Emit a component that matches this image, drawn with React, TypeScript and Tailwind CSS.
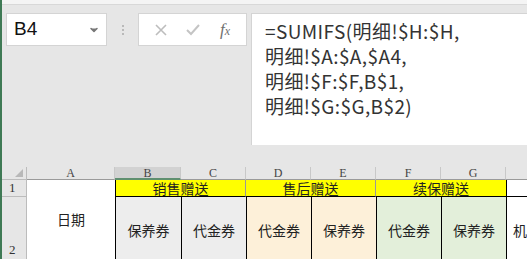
import { ChevronDown } from "lucide-react"

const cjk = { fontFamily: '"Noto Sans CJK SC", "Noto Sans", sans-serif' }
const serif = { fontFamily: '"Liberation Serif", "DejaVu Serif", serif' }

const colLetters = ["A", "B", "C", "D", "E", "F", "G", ""]

export default function App() {
  return (
    <div className="w-[527px] h-[259px] overflow-hidden bg-[#e6e6e6] border-l-2 border-[#3f7a55] relative" style={cjk}>
      {/* ribbon edge */}
      <div className="h-[5px] bg-[#f4f4f4] border-b border-[#d8d8d8]" />

      {/* formula bar */}
      <div className="flex items-start pt-[8px] pl-[4px]">
        <div className="w-[101px] h-[33px] bg-white border border-[#d4d4d4] flex items-center justify-between pl-[7px] pr-[6px]">
          <span className="text-[19px] text-[#111]" style={{ fontFamily: '"Liberation Sans", Arial, sans-serif' }}>B4</span>
          <ChevronDown className="w-3 h-3 text-[#777]" strokeWidth={3} fill="#777" />
        </div>
        <div className="w-[31px] h-[33px] flex flex-col items-center justify-center gap-[2px]">
          <span className="w-[2px] h-[2px] bg-[#aaa] rounded-full" />
          <span className="w-[2px] h-[2px] bg-[#aaa] rounded-full" />
          <span className="w-[2px] h-[2px] bg-[#aaa] rounded-full" />
        </div>
        <div className="w-[109px] h-[33px] bg-white border border-[#d4d4d4] flex items-center justify-around px-[6px]">
          <svg width="12" height="12" viewBox="0 0 12 12"><path d="M1 1 L11 11 M11 1 L1 11" stroke="#bdbdbd" strokeWidth="1.6" /></svg>
          <svg width="14" height="12" viewBox="0 0 14 12"><path d="M1 6 L5 10 L13 1" stroke="#c4c4c4" strokeWidth="2" fill="none" /></svg>
          <span className="italic text-[17px] leading-none text-[#707070]" style={serif}>f<span className="text-[12px]">x</span></span>
        </div>
        <div className="flex-1 ml-[4px] h-[132px] bg-white border-l border-t border-[#d4d4d4] pl-[13px] pt-[4px] text-[19px] leading-[25px] tracking-[0.4px] text-[#333]">
          <div>=SUMIFS(明细!$H:$H,</div>
          <div>明细!$A:$A,$A4,</div>
          <div>明细!$F:$F,B$1,</div>
          <div>明细!$G:$G,B$2)</div>
        </div>
      </div>

      {/* sheet */}
      <div
        className="absolute left-0 top-[167px] grid"
        style={{ gridTemplateColumns: "25px 88px 66px 65px 65px 65px 65px 65px 40px", gridTemplateRows: "13px 17px 66px" }}
      >
        {/* column headers */}
        <div className="bg-[#e6e6e6] border-r border-b border-[#bcbcbc] relative">
          <div className="absolute right-[3px] bottom-[2px] w-0 h-0 border-l-[8px] border-l-transparent border-b-[8px] border-b-[#b8b8b8]" />
        </div>
        {colLetters.map((c, i) => (
          <div
            key={i}
            className={`flex items-center justify-center text-[12px] leading-none text-[#444] border-r border-[#c8c8c8] ${
              c === "B" ? "bg-[#d2d2d2] border-b-2 border-b-[#5f8f6f]" : "bg-[#e6e6e6] border-b border-b-[#9a9a9a]"
            }`}
            style={serif}
          >
            {c}
          </div>
        ))}

        {/* row 1 */}
        <div className="bg-[#e6e6e6] border-r border-b border-[#bcbcbc] flex items-center pl-[7px] text-[13px] text-[#333]" style={serif}>1</div>
        <div className="row-span-2 bg-white flex items-center justify-center text-[14px] text-[#222] pb-[4px]">日期</div>
        <div className="col-span-2 bg-[#ffff00] border-l border-b border-black border-r-[#9a9a9a] border-r flex items-center justify-center text-[14px] leading-none text-[#222]">销售赠送</div>
        <div className="col-span-2 bg-[#ffff00] border-b border-r border-black border-r-[#9a9a9a] flex items-center justify-center text-[14px] leading-none text-[#222]">售后赠送</div>
        <div className="col-span-2 bg-[#ffff00] border-b border-black flex items-center justify-center text-[14px] leading-none text-[#222]">续保赠送</div>
        <div className="bg-white border-l border-b border-black" />

        {/* row 2 */}
        <div className="bg-[#e6e6e6] border-r border-[#bcbcbc] flex items-end pl-[7px] pb-[4px] text-[13px] text-[#333]" style={serif}>2</div>
        <div className="bg-[#ededed] border-l border-black flex items-center justify-center text-[14px] text-[#222]">保养券</div>
        <div className="bg-[#ededed] border-l border-black flex items-center justify-center text-[14px] text-[#222]">代金券</div>
        <div className="bg-[#fdf0d9] border-l border-black flex items-center justify-center text-[14px] text-[#222]">代金券</div>
        <div className="bg-[#fdf0d9] border-l border-black flex items-center justify-center text-[14px] text-[#222]">保养券</div>
        <div className="bg-[#e3efda] border-l border-black flex items-center justify-center text-[14px] text-[#222]">代金券</div>
        <div className="bg-[#e3efda] border-l border-black flex items-center justify-center text-[14px] text-[#222]">保养券</div>
        <div className="bg-white border-l border-black flex items-center pl-[6px] text-[14px] text-[#222] overflow-hidden whitespace-nowrap">机构</div>
      </div>
    </div>
  )
}
